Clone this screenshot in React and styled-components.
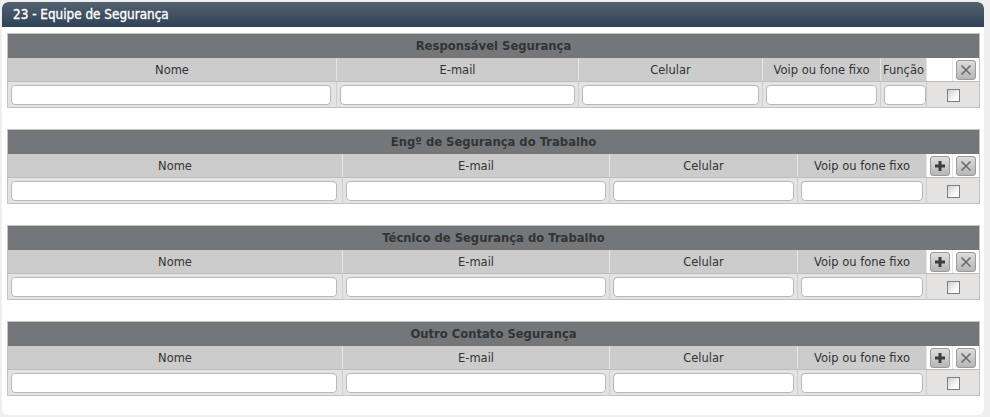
import React from "react";
import styled, { createGlobalStyle } from "styled-components";

const Global = createGlobalStyle`
  html, body { margin: 0; padding: 0; background: #efefef; }
  body { font-family: "DejaVu Sans", Verdana, sans-serif; }
`;

const Panel = styled.div`
  margin: 2px;
  width: 982px;
  height: 413px;
  background: #fff;
  border-radius: 6px;
  box-sizing: border-box;
  overflow: hidden;
`;

const TitleBar = styled.div`
  height: 25px;
  display: flex;
  align-items: center;
  padding-left: 11px;
  background: linear-gradient(#53616f, #2f4257);
  border-radius: 6px 6px 0 0;
  color: #fff;
  font-family: "DejaVu Sans Condensed", "DejaVu Sans", sans-serif;
  font-size: 13.4px;
  font-weight: normal;
  -webkit-text-stroke: 0.35px #fff;
`;

const Body = styled.div`
  padding: 6px 5px 0 5px;
  display: flex;
  flex-direction: column;
  gap: 21px;
`;

const Table = styled.table`
  width: 972px;
  border-collapse: collapse;
  table-layout: fixed;
  border: 1px solid #c2c2c2;
  font-size: 11.5px;
`;

const GroupHead = styled.th`
  height: 24px;
  padding: 0;
  background: #737779;
  color: #333;
  font-weight: bold;
  font-size: 11.6px;
  text-align: center;
  border-top: 1px solid #c2c2c2;
`;

const ColHead = styled.td`
  height: 23px;
  padding: 0;
  background: ${(p) => (p.$blank ? "#fff" : "#cccccd")};
  color: #333;
  text-align: center;
  white-space: nowrap;
  border-left: 1px solid #e4e4e4;
  border-bottom: 1px solid #bdbdbd;
  &:first-child { border-left: none; }
`;

const InputCell = styled.td`
  height: 25px;
  padding: 0 ${(p) => (p.$pr !== undefined ? p.$pr : 3)}px 0 3px;
  background: #e5e3e1;
  border-left: 1px solid #d0cecc;
  text-align: center;
  &:first-child { border-left: none; }
`;

const Field = styled.input`
  display: block;
  width: 100%;
  height: 20px;
  box-sizing: border-box;
  border: 1px solid #b9b9b9;
  border-radius: 4px;
  background: #fff;
  outline: none;
  padding: 0 4px;
`;

const Check = styled.span`
  display: inline-block;
  vertical-align: middle;
  width: 11px;
  height: 11px;
  border: 1px solid #7e7e7e;
  background: linear-gradient(135deg, #cfcfcf, #fbfbfb 70%);
`;

const IconBtn = styled.span`
  display: inline-flex;
  align-items: center;
  justify-content: center;
  vertical-align: middle;
  width: 18px;
  height: 18px;
  border: 1px solid #9a9a9a;
  border-radius: 3px;
  background: linear-gradient(#dcdcdc, #b8b8b8);
`;

const PlusIcon = () => (
  <svg width="12" height="12" viewBox="0 0 12 12">
    <path d="M6 1v10M1 6h10" stroke="#3d3d3d" strokeWidth="3" />
  </svg>
);

const XIcon = () => (
  <svg width="12" height="12" viewBox="0 0 12 12">
    <path d="M1.5 1.5l9 9M10.5 1.5l-9 9" stroke="#6a6a6a" strokeWidth="1.6" />
  </svg>
);

const Section = ({ title, cols, funcao }) => (
  <Table>
    <colgroup>
      {cols.map((w, i) => (
        <col key={i} style={{ width: w }} />
      ))}
    </colgroup>
    <thead>
      <tr>
        <GroupHead colSpan={cols.length}>{title}</GroupHead>
      </tr>
    </thead>
    <tbody>
      <tr>
        <ColHead>Nome</ColHead>
        <ColHead>E-mail</ColHead>
        <ColHead>Celular</ColHead>
        <ColHead>Voip ou fone fixo</ColHead>
        {funcao && <ColHead>Função</ColHead>}
        <ColHead $blank>
          {!funcao && (
            <IconBtn>
              <PlusIcon />
            </IconBtn>
          )}
        </ColHead>
        <ColHead $blank>
          <IconBtn>
            <XIcon />
          </IconBtn>
        </ColHead>
      </tr>
      <tr>
        <InputCell $pr={5}>
          <Field />
        </InputCell>
        <InputCell>
          <Field />
        </InputCell>
        <InputCell>
          <Field />
        </InputCell>
        <InputCell>
          <Field />
        </InputCell>
        {funcao && (
          <InputCell $pr={0}>
            <Field />
          </InputCell>
        )}
        <InputCell colSpan={2}>
          <Check />
        </InputCell>
      </tr>
    </tbody>
  </Table>
);

const colsA = [329, 242, 184, 118, 46, 26, 27];
const colsB = [335, 267, 188, 129, 26, 27];

export default function App() {
  return (
    <>
      <Global />
      <Panel>
        <TitleBar>23 - Equipe de Segurança</TitleBar>
        <Body>
          <Section title="Responsável Segurança" cols={colsA} funcao />
          <Section title="Engº de Segurança do Trabalho" cols={colsB} />
          <Section title="Técnico de Segurança do Trabalho" cols={colsB} />
          <Section title="Outro Contato Segurança" cols={colsB} />
        </Body>
      </Panel>
    </>
  );
}
